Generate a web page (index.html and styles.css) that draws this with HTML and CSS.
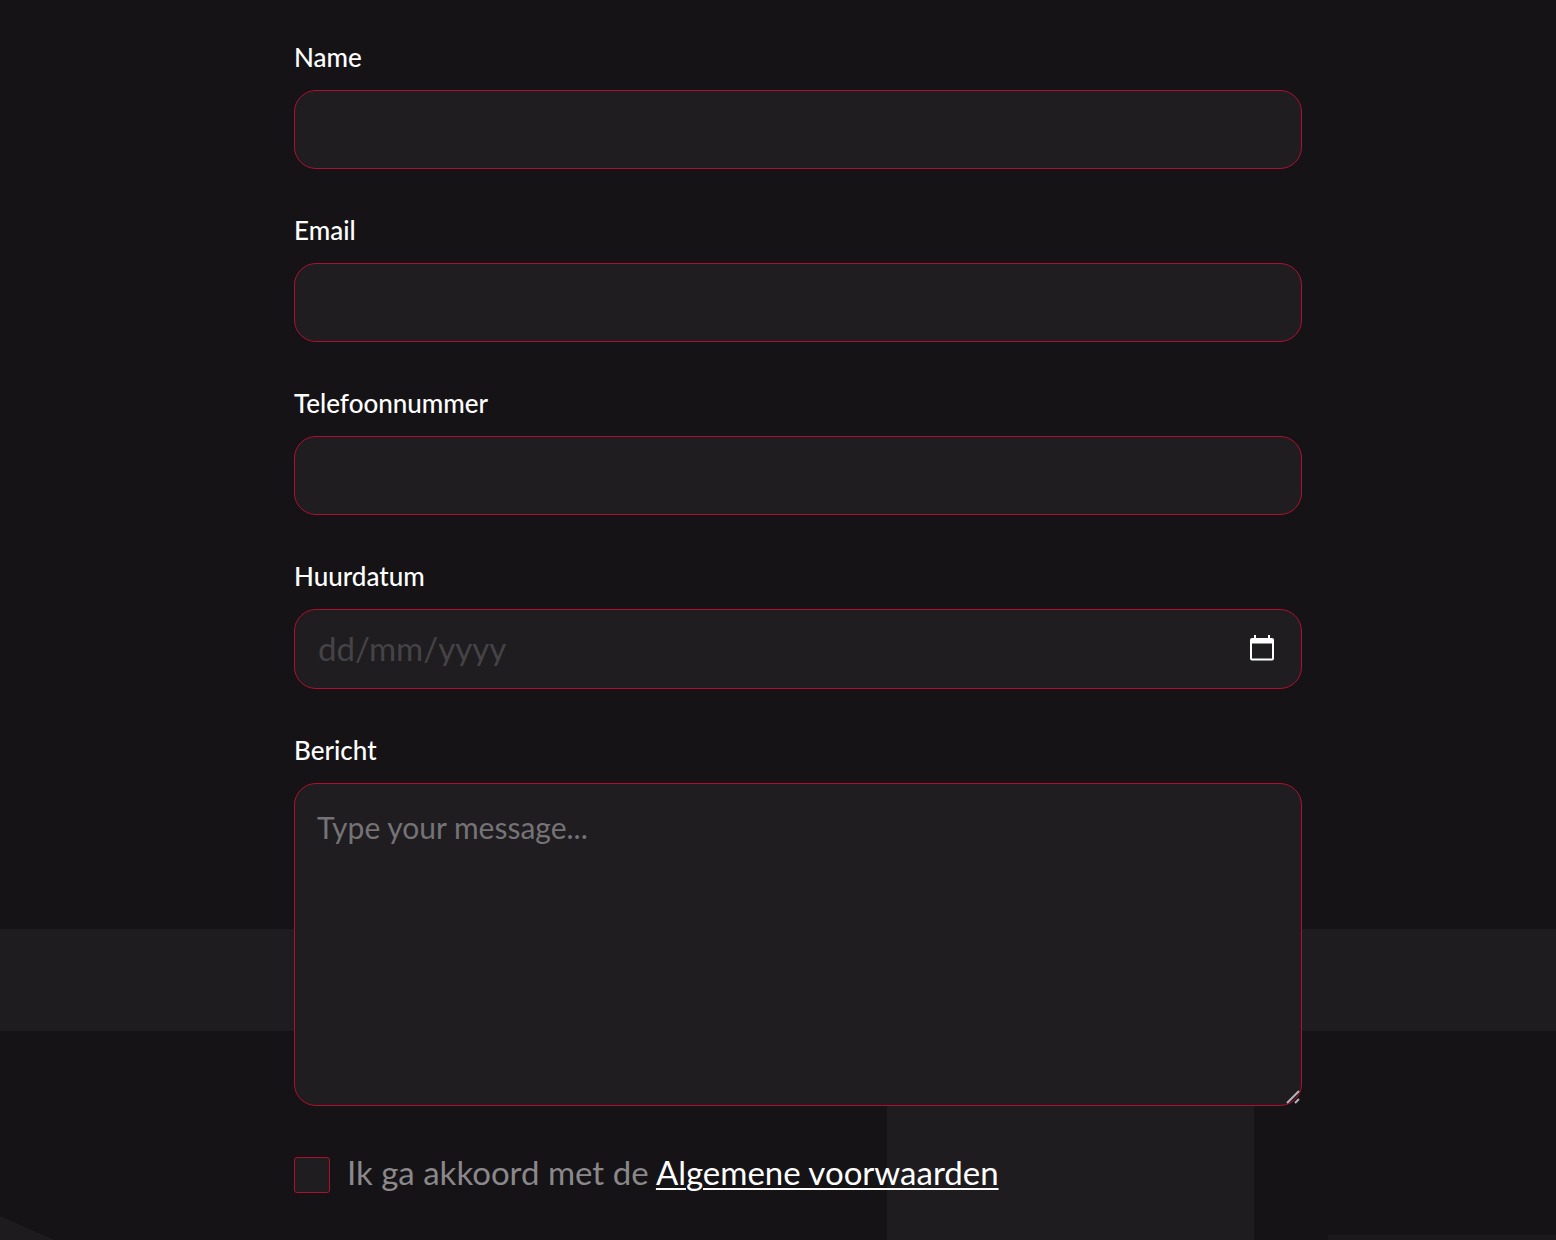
FILE: index.html
```html
<!DOCTYPE html>
<html lang="nl">
<head>
  <meta charset="utf-8">
  <meta name="viewport" content="width=device-width, initial-scale=1">
  <title>Huuraanvraag</title>
  <link rel="stylesheet" href="styles.css">
</head>
<body>
  <main class="page">
    <form class="form">
      <div class="field">
        <label class="label" for="name">Name</label>
        <input class="control" id="name" type="text">
      </div>
      <div class="field">
        <label class="label" for="email">Email</label>
        <input class="control" id="email" type="email">
      </div>
      <div class="field">
        <label class="label" for="phone">Telefoonnummer</label>
        <input class="control" id="phone" type="tel">
      </div>
      <div class="field">
        <label class="label" for="date">Huurdatum</label>
        <div class="control control-date">
          <input class="date-input" id="date" type="text" placeholder="dd/mm/yyyy">
          <button class="date-button" type="button" aria-label="Kies datum">
            <svg width="24" height="26" viewBox="0 0 24 26" aria-hidden="true">
              <path fill="#fff" fill-rule="evenodd" d="M4 0h2v3h12V0h2v3h2a2 2 0 0 1 2 2v18.500a2 2 0 0 1-2 2H2a2 2 0 0 1-2-2V5a2 2 0 0 1 2-2h2zM2 8.500v15h20v-15z"/>
            </svg>
          </button>
        </div>
      </div>
      <div class="field message">
        <label class="label" for="message">Bericht</label>
        <textarea class="control control-area" id="message" placeholder="Type your message..."></textarea>
        <svg class="grip" width="14" height="14" viewBox="0 0 14 14" aria-hidden="true">
          <path stroke="#b4b3b4" stroke-width="2" d="M1 13L13 1M9 13L13 9"/>
        </svg>
      </div>
      <div class="terms">
        <input class="checkbox" id="terms" type="checkbox">
        <div class="terms-text"><label for="terms">Ik ga akkoord met de</label> <a class="terms-link" href="#voorwaarden">Algemene voorwaarden</a></div>
      </div>
    </form>
  </main>
</body>
</html>
```
FILE: styles.css
```css
* {
  box-sizing: border-box;
}

body {
  margin: 0;
  background: #151316;
  color: #fff;
  font-family: Lato, "Open Sans", sans-serif;
}

.page {
  min-height: 100vh;
  padding: 42px 254px 42px 294px;
  background:
    linear-gradient(#1e1c1f, #1e1c1f) 0 929px / 100% 102px no-repeat,
    linear-gradient(#1e1c1f, #1e1c1f) 887px 1100px / 367px 140px no-repeat,
    linear-gradient(#1b191c, #1b191c) 1328px 1235px / 100% 5px no-repeat,
    linear-gradient(to top right, #1d1b1e 49%, transparent 51%) 0 1216px / 54px 24px no-repeat;
}

.form {
  display: flex;
  flex-direction: column;
  gap: 46px;
}

.field {
  display: flex;
  flex-direction: column;
  gap: 18px;
}

.label {
  font-size: 26px;
  font-weight: 500;
  line-height: 30px;
}

.control {
  width: 100%;
  height: 79px;
  padding: 0 23px;
  border: 1px solid #b0102f;
  border-radius: 22px;
  outline: 0;
  background: #1f1d20;
  color: #fff;
  font: 30px/36px Lato, "Open Sans", sans-serif;
}

.control-date {
  display: flex;
  align-items: center;
  height: 80px;
  padding: 0 27px 2px 23px;
  font-size: 33px;
}

.date-input {
  flex: 1;
  min-width: 0;
  padding: 0;
  border: 0;
  outline: 0;
  background: none;
  color: inherit;
  font: inherit;
}

.date-input::placeholder {
  color: #454346;
  opacity: 1;
}

.date-button {
  display: flex;
  padding: 0;
  border: 0;
  background: none;
  cursor: pointer;
}

.message {
  position: relative;
}

.control-area {
  height: 323px;
  padding: 25px 22px;
  resize: none;
}

.control-area::placeholder {
  color: #757376;
  opacity: 1;
}

.grip {
  position: absolute;
  right: 2px;
  bottom: 2px;
}

.terms {
  display: flex;
  align-items: flex-start;
  gap: 17px;
  color: #8a888b;
  font-size: 33px;
  line-height: 40px;
}

.checkbox {
  flex: none;
  width: 36px;
  height: 36px;
  margin: 5px 0 0;
  border: 1px solid #b0102f;
  border-radius: 3px;
  appearance: none;
  background: #1f1d20;
}

.checkbox:checked {
  background: #b0102f;
}

.terms-link {
  color: #fff;
  text-decoration-thickness: 2px;
  text-underline-offset: 3px;
}
```
